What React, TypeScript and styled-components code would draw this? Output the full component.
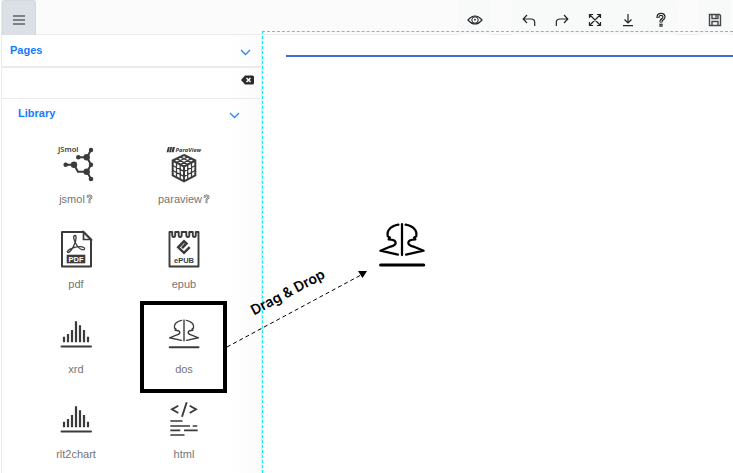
import React from "react";
import styled, { createGlobalStyle } from "styled-components";

const GlobalStyle = createGlobalStyle`
  * { box-sizing: border-box; }
  body {
    margin: 0;
    background: #fff;
    font-family: "Liberation Sans", Arial, sans-serif;
    font-size: 11px;
    line-height: 16px;
  }
  button {
    font: inherit;
    color: inherit;
    border: 0;
    padding: 0;
    background: none;
    cursor: pointer;
  }
  svg { display: block; }
`;

const Page = styled.div`
  display: flex;
  flex-direction: column;
  height: 100vh;
  margin-left: 1px;
  border-left: 1px solid #ebebeb;
  overflow: hidden;
`;

const Toolbar = styled.header`
  display: flex;
  flex: none;
  height: 35px;
  padding-right: 2px;
  background: #fbfbfb;
  box-shadow: inset 0 -1px #ebebeb;
`;

const Groups = styled.div`
  display: flex;
  gap: 21px;
  margin-left: auto;
`;

const Group = styled.div`
  display: flex;
  background: #f8f9f9;
  border-radius: 3px 3px 0 0;
`;

const ToolButton = styled.button<{ $active?: boolean }>`
  display: flex;
  align-items: center;
  justify-content: center;
  width: ${(p) => (p.$active ? 34 : 33)}px;
  padding-top: ${(p) => (p.$active ? 4 : 5)}px;
  color: ${(p) => (p.$active ? "#7d8184" : "#212529")};
  background: ${(p) => (p.$active ? "#dae0e5" : "transparent")};
  border: ${(p) => (p.$active ? "1px solid #d3d9df" : "0")};
  border-bottom: 0;
  border-radius: 3px 3px 0 0;
`;

const Workspace = styled.main`
  display: flex;
  flex: 1;
  min-height: 0;
  position: relative;
`;

const Sidebar = styled.aside`
  flex: none;
  width: 260px;
  border-right: 1px solid #ebebeb;
  background: linear-gradient(to right, #fff 230px, #fbfbfb 260px);
  overflow: hidden;
`;

const SectionHeader = styled.button<{ $nested?: boolean }>`
  display: flex;
  align-items: center;
  justify-content: space-between;
  width: 100%;
  height: ${(p) => (p.$nested ? 30 : 31)}px;
  padding: ${(p) => (p.$nested ? "0 21px 2px 16px" : "0 10px 2px 8px")};
  color: #147aff;
  font-weight: bold;
  svg { margin-top: 5px; }
`;

const SearchRow = styled.form`
  display: flex;
  align-items: center;
  height: 33px;
  padding: 0 7px 7px 8px;
  border-top: 2px solid #ebebeb;
  border-bottom: 1px solid #ebebeb;
`;

const SearchInput = styled.input`
  flex: 1;
  min-width: 0;
  border: 0;
  outline: 0;
  background: transparent;
  font: inherit;
`;

const Library = styled.div`
  display: grid;
  grid-template-columns: repeat(2, 108px);
  grid-auto-rows: 85px;
  justify-content: center;
  padding: 10px 3px 0 0;
`;

const Tile = styled.button<{ $highlighted?: boolean }>`
  display: flex;
  flex-direction: column;
  align-items: center;
  gap: 7px;
  padding-top: 5px;
  color: #757575;
  position: relative;
  &::after {
    content: "";
    display: ${(p) => (p.$highlighted ? "block" : "none")};
    position: absolute;
    inset: -8px 11px 1px 10px;
    border: 4px solid #000;
  }
`;

const TileLabel = styled.span`
  display: flex;
  align-items: center;
  gap: 1px;
`;

const Canvas = styled.section`
  flex: 1;
  min-width: 0;
  margin-top: -4px;
  padding: 23px 0 0 23px;
  border: 1px dashed #00f2ff;
  border-width: 1px 0 0 1px;
  position: relative;
`;

const Rule = styled.hr`
  height: 2px;
  margin: 0;
  border: 0;
  background: #4169e1;
`;

const DroppedItem = styled.div`
  position: absolute;
  left: 109px;
  top: 183px;
`;

const DragArrow = styled.svg`
  position: absolute;
  left: 225px;
  top: 233px;
  pointer-events: none;
`;

const DragLabel = styled.span`
  position: absolute;
  left: 245px;
  top: 249px;
  color: #000;
  font-family: Inter, sans-serif;
  font-size: 14px;
  font-weight: 600;
  white-space: nowrap;
  transform: rotate(-28deg);
`;

const ink = "#3b3b3b";

const Chevron = () => (
  <svg width="11" height="7" viewBox="0 0 11 7" fill="none" stroke="#2a86ff" strokeWidth="1.300">
    <path d="M1 1l4.500 4.500L10 1" />
  </svg>
);

const MenuIcon = () => (
  <svg width="12" height="10" viewBox="0 0 12 10" fill="currentColor">
    <path d="M0 0h12v2H0zM0 4h12v2H0zM0 8h12v2H0z" />
  </svg>
);

const ClearIcon = () => (
  <svg width="13" height="10" viewBox="0 0 13 10">
    <path d="M4 .5h7.500Q13 .5 13 2v6q0 1.500-1.500 1.500H4L0 5z" fill="#2b2b2b" />
    <path d="M5.500 3l4 4m0-4l-4 4" stroke="#fff" strokeWidth="1.500" />
  </svg>
);

const line = {
  width: 16,
  height: 16,
  viewBox: "0 0 16 16",
  fill: "none",
  stroke: "currentColor",
  strokeWidth: 1.2,
};

const EyeIcon = () => (
  <svg {...line}>
    <path d="M1 8Q4.500 4 8 4t7 4q-3.500 4-7 4T1 8z" />
    <circle cx="8" cy="8" r="3.200" strokeWidth="1" />
    <circle cx="8" cy="7.700" r=".9" fill="currentColor" stroke="none" />
  </svg>
);
const UndoIcon = () => (
  <svg {...line}>
    <path d="M6 3L2.200 7 6 11M2.500 7H10q3.700 0 3.700 3.500V14" />
  </svg>
);
const RedoIcon = () => (
  <svg {...line}>
    <path d="M10 3l3.800 4L10 11M13.500 7H6q-3.700 0-3.700 3.500V14" />
  </svg>
);
const ExpandIcon = () => (
  <svg {...line}>
    <path d="M2.500 2.500l11 11m0-11l-11 11M2.500 6V2.500H6M10 2.500h3.500V6M13.500 10v3.500H10M6 13.500H2.500V10" />
  </svg>
);
const DownloadIcon = () => (
  <svg {...line}>
    <path d="M8 2v9M4.500 7.500L8 11l3.500-3.500M3 13.600h10" />
  </svg>
);
const SaveIcon = () => (
  <svg {...line} stroke="#44484b" strokeWidth="1.400">
    <path d="M2.500 2.500h10l1 1v10h-11z" />
    <path d="M5 2.500v4h6v-4M9 3v2.500M5 13.500v-4h6v4" />
  </svg>
);

const QuestionIcon = ({ size = 16, core = "#f8f9f9" }: { size?: number; core?: string }) => (
  <svg width={Math.ceil(size * 0.7)} height={size} viewBox="-1 0 11 16" fill="none">
    <path d="M1.500 6V5q0-2.700 3-2.700T7.500 5q0 1.600-1.800 2.500-1.200.7-1.200 2.500v.6" stroke="currentColor" strokeWidth="3.200" />
    <path d="M1.500 5.500V5q0-2.700 3-2.700T7.500 5q0 1.600-1.800 2.500-1.200.7-1.200 2.500" stroke={core} strokeWidth=".9" />
    <rect x="2.900" y="11.700" width="3.200" height="3" fill="currentColor" />
    <rect x="4" y="12.700" width="1" height="1" fill={core} />
  </svg>
);

const TileSvg = ({ size = 40, children }: { size?: number; children: React.ReactNode }) => (
  <svg width={size} height={size} viewBox="0 0 40 40" fill="none" stroke={ink} strokeWidth="1.500">
    {children}
  </svg>
);

const JsmolIcon = () => (
  <TileSvg>
    <text x="2" y="8" fontSize="7.500" fontWeight="600" fontFamily="Noto Sans, sans-serif" fill={ink} stroke="none">JSmol</text>
    <path d="M35 6l-4 7.300h-9M31 13.300l4 7.400-4 7h-9l-4-7h-8M31 27.700l4 7.300" strokeWidth="2" />
    <g fill={ink} stroke="none">
      <circle cx="35" cy="6" r="2.200" />
      <circle cx="30.700" cy="13.300" r="3.200" />
      <circle cx="22.300" cy="13.300" r="2.300" />
      <circle cx="35" cy="20.700" r="2.200" />
      <circle cx="30.700" cy="27.700" r="3.200" />
      <circle cx="18" cy="20.700" r="3.200" />
      <circle cx="9.700" cy="20.700" r="2.300" />
      <circle cx="35" cy="35" r="2.300" />
    </g>
  </TileSvg>
);

const ParaviewIcon = () => (
  <TileSvg>
    <path d="M4 3h1.800L4.500 8.300H2.500zM6.400 3h1.800L7 8.300H5zM8.700 3h2.300L9.700 8.300H7.500z" fill={ink} stroke="none" />
    <text x="11.500" y="7.500" fontSize="5.800" fontWeight="bold" fontStyle="italic" fontFamily="Noto Sans, sans-serif" fill={ink} stroke="none">ParaView</text>
    <path d="M20 11l11.300 5.500v15L20 37.300 8.700 31.500v-15zM8.700 16.500L20 22.500l11.300-6M20 22.500v14.800" strokeWidth="2" />
    <path d="M16.200 12.900l11.300 5.600M12.500 14.700l11.200 5.800M23.800 12.900l-11.300 5.600M27.500 14.700l-11.200 5.800M12.500 18.500v15M16.200 20.500v15M23.700 20.500v15M27.500 18.500v15M8.700 21.500L20 27.400l11.300-5.900M8.700 26.500L20 32.400l11.300-5.900" strokeWidth="1.300" />
  </TileSvg>
);

const PdfIcon = () => (
  <TileSvg>
    <path d="M6 3h21.500l7.500 7.500v27H6z" strokeWidth="2" strokeLinejoin="round" />
    <path d="M27.500 3v7.500H35z" strokeWidth="1.700" />
    <path d="M19.200 6.500c-2.500 0-1.500 4 .3 7.500 1.800 3.600 4.500 6.500 7.500 6.800 2.500 0 2-2.600-.8-3-4-.4-8.700.7-12.200 2.300-3.500 1.700-3 4-1.300 3.200 2.100-1.100 4.600-5 6.200-9.300 1.200-3.300 1.700-7.500.3-7.500z" strokeWidth="1.300" />
    <rect x="10.700" y="25.700" width="18.600" height="8.600" fill={ink} stroke="none" />
    <text x="20" y="32.700" textAnchor="middle" fontSize="7.500" fontWeight="bold" fontFamily="Liberation Sans, sans-serif" fill="#fff" stroke="none">PDF</text>
  </TileSvg>
);

const EpubIcon = () => (
  <TileSvg>
    <path d="M5.500 3h2.700v3q0 2 1.500 2t1.500-2V3h3.500v3q0 2 1.500 2t1.500-2V3h4.600v3q0 2 1.500 2t1.500-2V3h3.500v3q0 2 1.500 2t1.500-2V3h2.700v34.500h-29z" strokeWidth="1.900" strokeLinejoin="round" />
    <path d="M18 19l4.500-4.500L20 12.300l-5.800 6 5.800 5.500 5.700-5.700" strokeWidth="2.500" />
    <text x="20" y="34" textAnchor="middle" fontSize="7.500" fontWeight="bold" fontFamily="Liberation Sans, sans-serif" fill={ink} stroke="none">ePUB</text>
  </TileSvg>
);

const SpectrumIcon = () => (
  <TileSvg>
    <path d="M8 22.700v5.600M12 20v8.300M16 16v12.300M20 7.300v21M24 11.300v17M28 16v12.300M32 22.700v5.600" strokeWidth="2.200" />
    <path d="M5.500 32.500h29.500" strokeWidth="2" strokeLinecap="round" />
  </TileSvg>
);

const DosIcon = ({ size = 40, color = ink, weight = 1.4 }: { size?: number; color?: string; weight?: number }) => {
  const half = "M22.400 6.400C24.800 6.800 27 7.800 28.300 9.300 29.700 10.700 29.800 12.500 29.500 14.200L28 15.100 28.900 16.200C26 16.300 24.200 16.900 24.200 18.600 24.300 20.500 26.600 20.800 28.400 21.300L34.400 23.800 22.700 26.400";
  return (
    <TileSvg size={size}>
      <g stroke={color} strokeWidth={weight} strokeLinecap="round" strokeLinejoin="round">
        <path d={half} />
        <path d={half} transform="matrix(-1 0 0 1 40 0)" />
        <path d="M20 6v20.700" />
        <path d="M5.700 33.300h28.800" strokeWidth="2" />
      </g>
    </TileSvg>
  );
};

const HtmlIcon = () => (
  <TileSvg>
    <path d="M14.300 6.700L8 10.300l6.300 3.700M22.700 3.300L18 17.700M25.700 6.700l6.300 3.600-6.300 3.700" strokeWidth="1.900" />
    <path d="M6.300 22h12.200M6.300 27H26M28.700 27h4.600M6.300 31.400h10M20 31.400h13.700M6.300 36h14.200" strokeWidth="1.700" />
  </TileSvg>
);

const toolGroups = [
  [{ name: "Preview", icon: <EyeIcon /> }],
  [
    { name: "Undo", icon: <UndoIcon /> },
    { name: "Redo", icon: <RedoIcon /> },
    { name: "Full screen", icon: <ExpandIcon /> },
    { name: "Download", icon: <DownloadIcon /> },
    { name: "Help", icon: <QuestionIcon /> },
  ],
  [{ name: "Save", icon: <SaveIcon /> }],
];

const items = [
  { name: "jsmol", icon: <JsmolIcon />, help: true },
  { name: "paraview", icon: <ParaviewIcon />, help: true },
  { name: "pdf", icon: <PdfIcon /> },
  { name: "epub", icon: <EpubIcon /> },
  { name: "xrd", icon: <SpectrumIcon /> },
  { name: "dos", icon: <DosIcon />, highlighted: true },
  { name: "rlt2chart", icon: <SpectrumIcon /> },
  { name: "html", icon: <HtmlIcon /> },
];

export default function App() {
  return (
    <Page>
      <GlobalStyle />
      <Toolbar>
        <ToolButton $active aria-label="Menu"><MenuIcon /></ToolButton>
        <Groups>
          {toolGroups.map((tools) => (
            <Group key={tools[0].name}>
              {tools.map((tool) => (
                <ToolButton key={tool.name} aria-label={tool.name}>{tool.icon}</ToolButton>
              ))}
            </Group>
          ))}
        </Groups>
      </Toolbar>
      <Workspace>
        <Sidebar>
          <SectionHeader>Pages<Chevron /></SectionHeader>
          <SearchRow>
            <SearchInput type="text" aria-label="Search" />
            <button type="reset" aria-label="Clear"><ClearIcon /></button>
          </SearchRow>
          <SectionHeader $nested>Library<Chevron /></SectionHeader>
          <Library>
            {items.map((item) => (
              <Tile key={item.name} $highlighted={item.highlighted}>
                {item.icon}
                <TileLabel>
                  {item.name}
                  {item.help && <QuestionIcon size={10} core="#fff" />}
                </TileLabel>
              </Tile>
            ))}
          </Library>
        </Sidebar>
        <Canvas>
          <Rule />
          <DroppedItem><DosIcon size={60} color="#000" weight={1.5} /></DroppedItem>
        </Canvas>
        <DragArrow width="142" height="82" viewBox="0 0 142 82">
          <path d="M0 79L134 7" stroke="#000" strokeDasharray="4 3" fill="none" />
          <path d="M131 3h9l-4.500 7z" fill="#000" />
        </DragArrow>
        <DragLabel>Drag &amp; Drop</DragLabel>
      </Workspace>
    </Page>
  );
}
